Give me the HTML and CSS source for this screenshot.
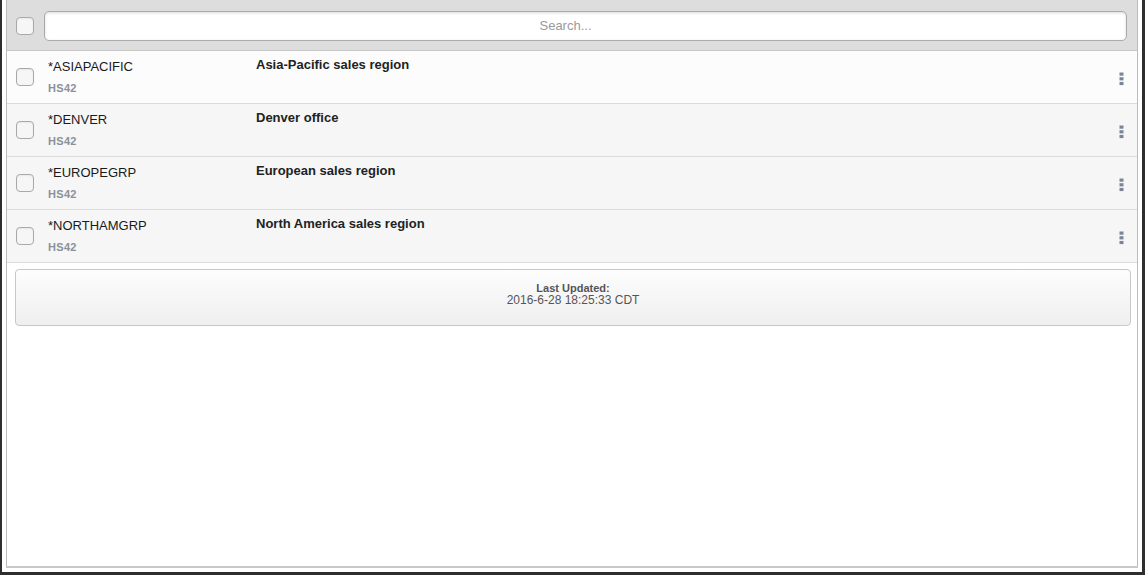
FILE: index.html
```html
<!DOCTYPE html>
<html lang="en">
<head>
  <meta charset="UTF-8">
  <title>Groups</title>
  <link rel="stylesheet" href="styles.css">
</head>
<body>
  <div class="frame">
    <div class="panel">
      <header class="toolbar">
        <span class="check"></span>
        <input class="search" type="text" placeholder="Search...">
      </header>

      <ul class="list">
        <li class="row first">
          <span class="check"></span>
          <div class="name">
            <div class="title">*ASIAPACIFIC</div>
            <div class="sub">HS42</div>
          </div>
          <div class="desc">Asia-Pacific sales region</div>
          <svg class="more" width="5" height="14" viewBox="0 0 5 14"><rect x="0.5" y="0.5" width="4" height="3.2"/><rect x="0.5" y="5.2" width="4" height="3.2"/><rect x="0.5" y="9.9" width="4" height="3.2"/></svg>
        </li>
        <li class="row">
          <span class="check"></span>
          <div class="name">
            <div class="title">*DENVER</div>
            <div class="sub">HS42</div>
          </div>
          <div class="desc">Denver office</div>
          <svg class="more" width="5" height="14" viewBox="0 0 5 14"><rect x="0.5" y="0.5" width="4" height="3.2"/><rect x="0.5" y="5.2" width="4" height="3.2"/><rect x="0.5" y="9.9" width="4" height="3.2"/></svg>
        </li>
        <li class="row">
          <span class="check"></span>
          <div class="name">
            <div class="title">*EUROPEGRP</div>
            <div class="sub">HS42</div>
          </div>
          <div class="desc">European sales region</div>
          <svg class="more" width="5" height="14" viewBox="0 0 5 14"><rect x="0.5" y="0.5" width="4" height="3.2"/><rect x="0.5" y="5.2" width="4" height="3.2"/><rect x="0.5" y="9.9" width="4" height="3.2"/></svg>
        </li>
        <li class="row">
          <span class="check"></span>
          <div class="name">
            <div class="title">*NORTHAMGRP</div>
            <div class="sub">HS42</div>
          </div>
          <div class="desc">North America sales region</div>
          <svg class="more" width="5" height="14" viewBox="0 0 5 14"><rect x="0.5" y="0.5" width="4" height="3.2"/><rect x="0.5" y="5.2" width="4" height="3.2"/><rect x="0.5" y="9.9" width="4" height="3.2"/></svg>
        </li>
      </ul>

      <div class="updated">
        <strong>Last Updated:</strong>
        <span>2016-6-28 18:25:33 CDT</span>
      </div>
    </div>
  </div>
</body>
</html>
```

FILE: styles.css
```css
* {
  box-sizing: border-box;
}
html, body {
  margin: 0;
  padding: 0;
}
body {
  font-family: "Liberation Sans", Arial, sans-serif;
  color: #222;
  background: #fff;
}
.frame {
  height: 575px;
  padding: 0 4px 4px 4px;
  border-left: 2px solid #2e2e2e;
  border-right: 3px solid #2e2e2e;
  border-bottom: 3px solid #2e2e2e;
  background: #fff;
}
.panel {
  height: 100%;
  border: 1px solid #bcbcbc;
  border-top: none;
  border-bottom: 2px solid #c9c9c9;
  background: #fff;
  display: flex;
  flex-direction: column;
}
.toolbar {
  height: 51px;
  display: flex;
  align-items: center;
  gap: 10px;
  padding: 1px 10px 0 9px;
  background: #dddddd;
  border-bottom: 1px solid #c6c6c6;
}
.check {
  flex: none;
  width: 18px;
  height: 18px;
  border: 1px solid #a9a9a9;
  border-radius: 4px;
  background: #f6f6f6;
  box-shadow: inset 0 1px 2px rgba(0, 0, 0, 0.06);
}
.search {
  flex: 1;
  height: 30px;
  margin: 0;
  padding: 0 40px 0 0;
  border: 1px solid #aaa;
  border-radius: 5px;
  background: #fff;
  box-shadow: inset 0 1px 3px rgba(0, 0, 0, 0.15);
  font: 13px "Liberation Sans", Arial, sans-serif;
  text-align: center;
  color: #333;
}
.search::placeholder {
  color: #9a9a9a;
}
.list {
  list-style: none;
  margin: 0;
  padding: 0;
}
.row {
  height: 53px;
  display: flex;
  align-items: flex-start;
  padding: 0 13px 0 9px;
  background: #f6f6f6;
  border-bottom: 1px solid #dcdcdc;
}
.row.first {
  background: #fcfcfc;
}
.row .check {
  margin-top: 17px;
}
.name {
  width: 208px;
  margin-left: 14px;
  padding-top: 7px;
}
.title {
  font-size: 13px;
  line-height: 17px;
  color: #1a1a1a;
}
.sub {
  margin-top: 7px;
  font-size: 11px;
  line-height: 13px;
  font-weight: bold;
  letter-spacing: 0.3px;
  color: #8b9099;
}
.desc {
  flex: 1;
  padding-top: 5px;
  font-size: 13px;
  line-height: 17px;
  font-weight: bold;
  color: #222;
}
.more {
  margin-top: 21px;
  fill: #7b8596;
}
.updated {
  margin: 6px 6px 0 8px;
  height: 57px;
  border: 1px solid #c8c8c8;
  border-radius: 4px;
  background: linear-gradient(#fdfdfd, #efefef);
  display: flex;
  flex-direction: column;
  align-items: center;
  justify-content: center;
  padding-bottom: 6px;
  color: #555;
}
.updated strong {
  font-size: 11px;
  line-height: 12px;
}
.updated span {
  font-size: 12px;
  line-height: 13px;
}
```
